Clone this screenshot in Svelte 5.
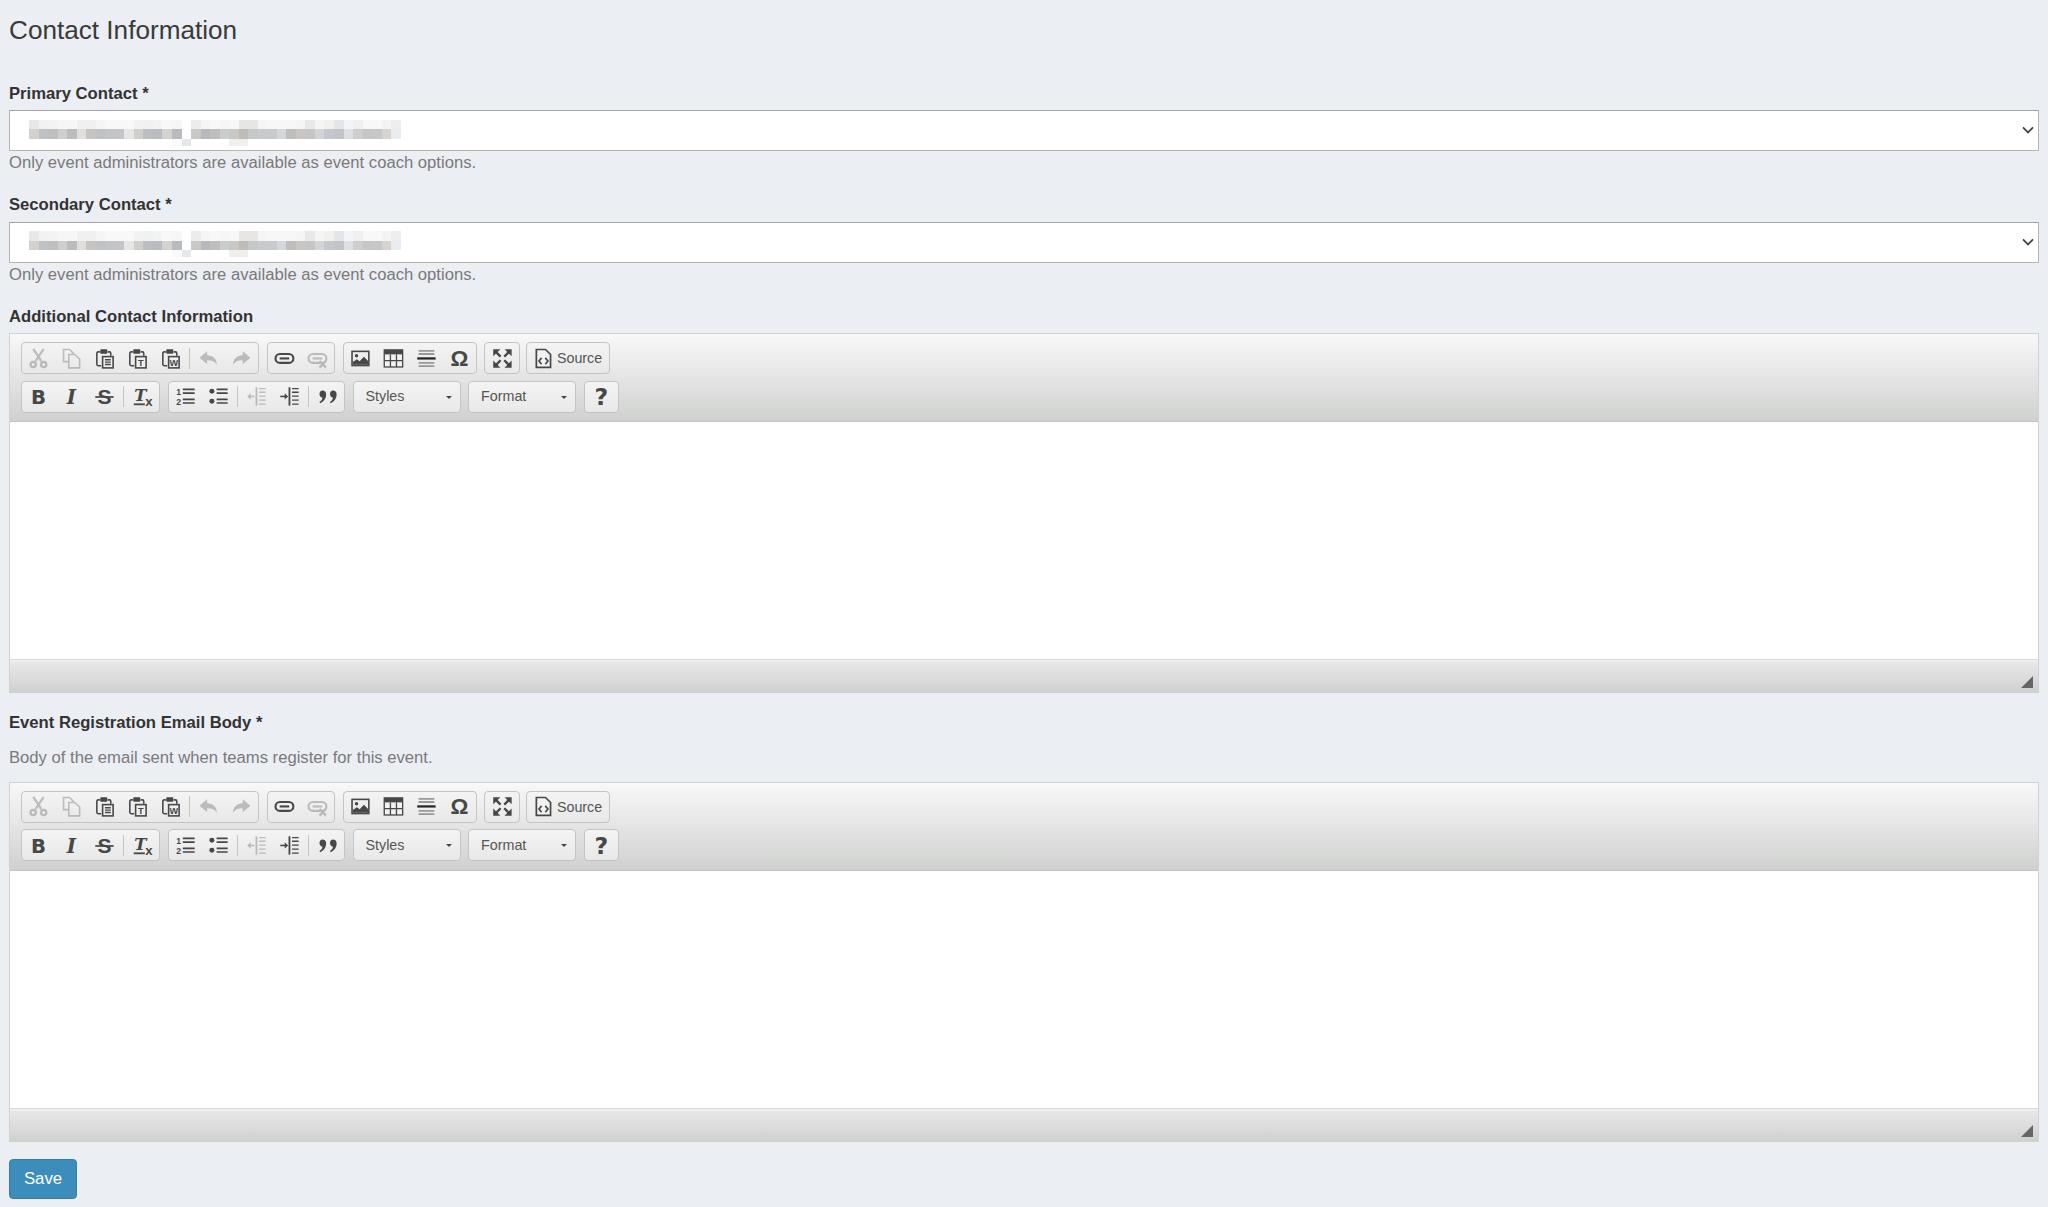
<script>
  const ink = "#474747";
  const paste = `<path d="M4.5 3H3.2a1 1 0 0 0-1 1v8.5a1 1 0 0 0 1 1h2.3M10.5 3h1.3a1 1 0 0 1 1 1v2" fill="none" stroke="${ink}" stroke-width="1.2"/><rect x="4.8" y="1" width="5.4" height="3.4" rx=".6" fill="${ink}"/><rect x="6.6" y="6.6" width="8" height="8.6" fill="#eee" stroke="${ink}" stroke-width="1.2"/>`;
  const tiny = (t) => `<text x="10.6" y="13.4" font-size="7" font-weight="700" text-anchor="middle" font-family="Liberation Sans" fill="${ink}">${t}</text>`;
  const glyph = (t, fam, size, y, extra = "") => `<text x="8" y="${y}" font-size="${size}" text-anchor="middle" font-family="${fam}" fill="${ink}" ${extra}>${t}</text>`;
  const arrow = (x) => `<path d="M${x} 1h5.4L${x} 6.4z" fill="${ink}"/><path d="M${x + 1.4} 2.4l4.2 4.2" stroke="${ink}" stroke-width="1.8"/>`;
  const link = `<rect x="1.2" y="4.6" width="13.6" height="6.8" rx="3.4" fill="none" stroke="${ink}" stroke-width="1.6"/><path d="M4.4 8h7.2" stroke="${ink}" stroke-width="1.6"/>`;

  const icons = {
    cut: `<g fill="none" stroke="${ink}" stroke-width="1.7"><path d="M4 .8l6.2 9.2M12 .8L5.8 10"/><circle cx="4" cy="12.6" r="2"/><circle cx="12" cy="12.6" r="2"/></g>`,
    copy: `<g fill="#f0f0f0" stroke="${ink}" stroke-width="1.2"><path d="M2 1.2h4.6l2.6 2.6v6.6H2z"/><path d="M6 5h4.6l3.6 3.4v6.8H6z"/></g>`,
    paste: `${paste}<path d="M8.4 9h4.4M8.4 10.8h4.4M8.4 12.6h4.4" stroke="${ink}" stroke-width="1"/>`,
    pasteText: `${paste}${tiny("T")}`,
    pasteWord: `${paste}${tiny("W")}`,
    undo: `<path d="M7 2.6L1.2 7.4 7 12.2V9.3c3.2 0 5.6.6 7.4 3.5 0-4.4-3-7.2-7.4-7.3z" fill="${ink}"/>`,
    redo: `<path d="M9 2.6l5.8 4.8L9 12.2V9.3c-3.2 0-5.6.6-7.4 3.5 0-4.4 3-7.2 7.4-7.3z" fill="${ink}"/>`,
    link,
    unlink: `${link}<path d="M9.6 10l4.8 5M14.4 10l-4.8 5" stroke="${ink}" stroke-width="1.7"/>`,
    image: `<rect x="1" y="2" width="14" height="12" fill="${ink}"/><rect x="2.2" y="3.2" width="11.6" height="9.6" fill="#eee"/><circle cx="5" cy="6" r="1.3" fill="${ink}"/><path d="M2.2 12.8v-2l3-2.2 2.2 1.6 3.2-3.4 3.2 3.2v2.8z" fill="${ink}"/>`,
    table: `<rect x="1" y="1.5" width="14" height="13" fill="#f2f2f2" stroke="${ink}" stroke-width="1"/><rect x="1" y="1.5" width="14" height="3.4" fill="${ink}"/><path d="M1 9.6h14M5.7 5v9.5M10.3 5v9.5" stroke="${ink}" stroke-width="1"/>`,
    rule: `<path d="M2 2.2h12M2 4.6h12M2 11.4h12M2 13.8h12" stroke="#999" stroke-width="1.4"/><path d="M1 8h14" stroke="#222" stroke-width="1.7"/>`,
    omega: glyph("Ω", "Liberation Sans", 17, 14, 'font-weight="700"'),
    maximize: `${arrow(1)}<g transform="matrix(-1 0 0 1 16 0)">${arrow(1)}</g><g transform="matrix(1 0 0 -1 0 16)">${arrow(1)}</g><g transform="matrix(-1 0 0 -1 16 16)">${arrow(1)}</g>`,
    source: `<path d="M2.6 1.2h7l3.8 3.8v9.8H2.6z" fill="#f2f2f2" stroke="${ink}" stroke-width="1.3"/><path d="M6.6 7.6L4.6 10l2 2.4M9.4 7.6l2 2.4-2 2.4" fill="none" stroke="${ink}" stroke-width="1.3"/>`,
    bold: glyph("B", "DejaVu Sans", 15, 13.6, 'font-weight="700"'),
    italic: glyph("I", "DejaVu Serif", 15, 13.6, 'font-weight="700" font-style="italic"'),
    strike: `${glyph("S", "Liberation Sans", 16, 13.6, 'font-weight="700"')}<path d="M1 8.4h14" stroke="${ink}" stroke-width="1.3"/>`,
    removeFormat: `<text x="6.4" y="11.4" font-size="12.5" text-anchor="middle" font-family="DejaVu Serif" font-weight="700" font-style="italic" fill="${ink}">T</text><path d="M1.4 14h8.4" stroke="${ink}" stroke-width="1.4"/><text x="13" y="15.6" font-size="10" text-anchor="middle" font-family="Liberation Sans" font-weight="700" fill="${ink}">x</text>`,
    numbered: `<g font-size="6.6" font-weight="700" font-family="Liberation Sans" fill="${ink}"><text x="1" y="7">1</text><text x="1" y="14.4">2</text></g><path d="M6 2.6h9M6 5.4h9M6 10.2h9M6 13h9" stroke="${ink}" stroke-width="1.3"/>`,
    bullets: `<circle cx="3" cy="4" r="1.9" fill="${ink}"/><circle cx="3" cy="11.6" r="1.9" fill="${ink}"/><path d="M6.6 2.6h8.4M6.6 5.4h8.4M6.6 10.2h8.4M6.6 13h8.4" stroke="${ink}" stroke-width="1.3"/>`,
    outdent: `<path d="M8 1v14" stroke="${ink}" stroke-width="1.4"/><path d="M10 2h5M10 4.8h5M10 7.8h5M10 10.8h5M10 13.8h5" stroke="${ink}" stroke-width="1"/><path d="M2 8h4.4" stroke="${ink}" stroke-width="1.2"/><path d="M1 8l2.6-2.4v4.8z" fill="${ink}"/>`,
    indent: `<path d="M8 1v14" stroke="${ink}" stroke-width="1.4"/><path d="M10 2h5M10 4.8h5M10 7.8h5M10 10.8h5M10 13.8h5" stroke="${ink}" stroke-width="1"/><path d="M1 8h4.4" stroke="${ink}" stroke-width="1.2"/><path d="M7 8L4.4 5.6v4.8z" fill="${ink}"/>`,
    quote: `<path d="M4 3.4a3 3 0 0 1 3 3c0 3.4-1.8 5.6-4.6 6.8l-.5-1c1.5-.9 2.2-2 2.3-3.2A2.9 2.9 0 0 1 4 3.4z" fill="${ink}"/><path transform="translate(8 0)" d="M4 3.4a3 3 0 0 1 3 3c0 3.4-1.8 5.6-4.6 6.8l-.5-1c1.5-.9 2.2-2 2.3-3.2A2.9 2.9 0 0 1 4 3.4z" fill="${ink}"/>`,
    help: glyph("?", "DejaVu Sans", 18, 14.6, 'font-weight="700"'),
  };

  // "|" is a separator, "-" prefix marks a disabled button
  const topRow = [
    ["-cut", "-copy", "paste", "pasteText", "pasteWord", "|", "-undo", "-redo"],
    ["link", "-unlink"],
    ["image", "table", "rule", "omega"],
    ["maximize"],
  ];
  const bottomRow = [
    ["bold", "italic", "strike", "|", "removeFormat"],
    ["numbered", "bullets", "|", "-outdent", "indent", "|", "quote"],
  ];

  // the redacted option text, sampled as three rows of blocks
  const mosaic = [
    "e8e8e8 f2f2f2 f3f3f3 f6f6f6 f6f6f4 f0f0f0 f0f0f0 f5f5f5 f8f8f8 f8f8f8 f8f8f6 f1f3f3 f0f1f2 f2f3f3 f8f8f8 f6f6f6 fff ececec f5f5f5 f8f8f8 f5f5f5 f7f7f7 e8e6e2 e8e6e2 f3f5f8 f7f7f7 f7f7f7 f7f7f7 f5f5f5 e8e8e8 f5f5f2 f2f1ee e3e5e9 f2f5f5 efefef f8f8f8 f8f8f8 f5f4f2 eeeeee",
    "d4d0cd bfc1c4 bdbfc1 cfcfcf bbbcbe e0dfdc c6c5c2 bfc1c2 c3c4c5 c4c5c9 e6e6e6 cfcecb bcbec1 bbbcbf d2d2cf b8babd fff c9c8c5 b8b9bb bebebe cacdd0 c9c8c5 c0bcb8 c5c7ca c8cacc c9cacb d4d7db bebebd c9c5c2 c6c5c4 d4d4d6 c2c8ce c2c4c5 dcdfe3 cfcecc c6c6c6 c6c7c6 d6d4d1 e9ecf0",
    "fff fff fff fff fff fff fff fff fff fff fff fff fff fff fff fafafa e5e8e8 fff fff fff fff f1efed f1efed",
  ].map((row) => row.split(" "));
</script>

{#snippet icon(name)}
  <svg viewBox="-3 -3 22 22" width="28.9" height="28.9" aria-hidden="true">{@html icons[name]}</svg>
{/snippet}

{#snippet group(items)}
  <div class="group">
    {#each items as item}
      {#if item === "|"}
        <span class="sep"></span>
      {:else}
        <span class="btn" class:off={item[0] === "-"}>{@render icon(item.replace("-", ""))}</span>
      {/if}
    {/each}
  </div>
{/snippet}

{#snippet combo(text)}
  <div class="group combo"><span>{text}</span><i class="caret"></i></div>
{/snippet}

{#snippet editor()}
  <div class="editor">
    <div class="toolbar">
      <div class="row">
        {#each topRow as items}
          {@render group(items)}
        {/each}
        <div class="group source">{@render icon("source")}<span>Source</span></div>
      </div>
      <div class="row">
        {#each bottomRow as items}
          {@render group(items)}
        {/each}
        {@render combo("Styles")}
        {@render combo("Format")}
        {@render group(["help"])}
      </div>
    </div>
    <div class="body"></div>
    <div class="foot"><i class="grip"></i></div>
  </div>
{/snippet}

{#snippet picker()}
  <div class="select">
    <div class="mosaic">
      {#each mosaic as row}
        <div class="line">
          {#each row as c}
            <span style="background:#{c}"></span>
          {/each}
        </div>
      {/each}
    </div>
    <svg class="chevron" viewBox="0 0 12 8" width="12" height="8" aria-hidden="true">
      <path d="M1 1.4l5 5 5-5" fill="none" stroke="#444" stroke-width="1.8" />
    </svg>
  </div>
{/snippet}

<main>
  <h2>Contact Information</h2>

  <section class="first">
    <label for="primary">Primary Contact *</label>
    {@render picker()}
    <p>Only event administrators are available as event coach options.</p>
  </section>

  <section>
    <label for="secondary">Secondary Contact *</label>
    {@render picker()}
    <p>Only event administrators are available as event coach options.</p>
  </section>

  <section class="rich">
    <label for="additional">Additional Contact Information</label>
    {@render editor()}
  </section>

  <section class="rich email">
    <label for="email">Event Registration Email Body *</label>
    <p>Body of the email sent when teams register for this event.</p>
    {@render editor()}
  </section>

  <button type="button" class="save">Save</button>
</main>

<style>
  :global(body) {
    background: #ebeef3;
    font-family: "Liberation Sans", Arial, sans-serif;
    color: #333;
  }

  main {
    min-height: 1207px;
    box-sizing: border-box;
    padding: 14px 9px 0;
  }

  h2 {
    margin: 0;
    padding-bottom: 11px;
    font-size: 26.15px;
    line-height: 32px;
    font-weight: 400;
    color: #3a3a3a;
    border-bottom: 1px solid #eef0f4;
  }

  section {
    margin-top: 20px;
  }

  section.first {
    margin-top: 24.5px;
  }

  section.email {
    margin-top: 19px;
  }

  label {
    display: block;
    margin-bottom: 5.5px;
    font-size: 16.65px;
    line-height: 22px;
    font-weight: 700;
  }

  p {
    margin: 0;
    padding-top: 1px;
    font-size: 16.65px;
    line-height: 22px;
    color: #7a7a7a;
  }

  .email p {
    margin: 13px 0 12.5px;
    padding: 0;
  }

  .select {
    position: relative;
    box-sizing: border-box;
    height: 41px;
    padding: 8.5px 0 0 19px;
    background: #fff;
    border: 1px solid #b4b4b4;
    border-top-color: #a6a6a6;
  }

  .line {
    display: flex;
    height: 9.5px;
  }

  .line:last-child {
    height: 7px;
  }

  .line span {
    width: 9.54px;
    flex: none;
  }

  .chevron {
    position: absolute;
    right: 4px;
    top: 15px;
  }

  .editor {
    box-sizing: border-box;
    height: 360px;
    display: flex;
    flex-direction: column;
    border: 1px solid #d1d1d1;
    background: #fff;
  }

  .toolbar {
    height: 87px;
    box-sizing: border-box;
    padding: 8px 0 0 10.7px;
    display: flex;
    flex-direction: column;
    gap: 6.5px;
    background: linear-gradient(#f8f8f8, #cfd1cf);
  }

  .row {
    display: flex;
    gap: 7.5px;
    height: 32px;
  }

  .group {
    box-sizing: border-box;
    display: flex;
    align-items: center;
    border: 1px solid #c4c4c4;
    border-radius: 4px;
    background: linear-gradient(#f4f4f4, #e8e8e8);
    font-size: 14.3px;
    color: #555;
  }

  .btn {
    width: 33.1px;
    display: flex;
    justify-content: center;
  }

  .off {
    opacity: 0.3;
  }

  .sep {
    width: 1px;
    height: 21px;
    margin: 0 2px;
    background: #c4c4c4;
  }

  .source {
    width: 84px;
    padding-left: 2px;
    margin-left: -1px;
  }

  .source span {
    margin-left: -1px;
  }

  .combo {
    position: relative;
    width: 108px;
    padding: 0 0 1px 12px;
  }

  .caret {
    position: absolute;
    right: 8px;
    top: 14px;
    border: 3px solid transparent;
    border-top: 3.5px solid #474747;
    border-bottom: 0;
  }

  .body {
    flex: 1;
    background: #fff;
    border-top: 1px solid #c4c4c4;
    border-bottom: 1px solid #d8d8d8;
  }

  .foot {
    position: relative;
    box-sizing: border-box;
    height: 32px;
    border-top: 2px solid #f0f0f0;
    background: linear-gradient(#e8e8e8, #cfd1cf);
  }

  .grip {
    position: absolute;
    right: 5px;
    bottom: 4px;
    width: 0;
    height: 0;
    border-left: 12px solid transparent;
    border-bottom: 12px solid #666;
  }

  .save {
    display: block;
    width: 68px;
    height: 40px;
    margin-top: 17px;
    padding: 0;
    border: 1px solid #367fa9;
    border-radius: 4px;
    background: #3c8dbc;
    color: #fff;
    font: 16.8px "Liberation Sans", Arial, sans-serif;
  }
</style>
